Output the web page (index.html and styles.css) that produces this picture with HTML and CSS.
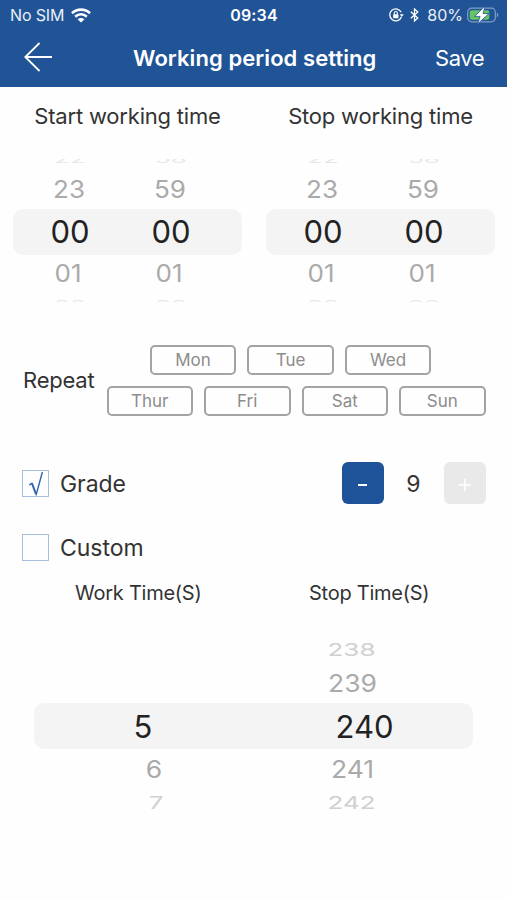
FILE: index.html
```html
<!DOCTYPE html>
<html lang="en">
<head>
<meta charset="utf-8">
<title>Working period setting</title>
<link rel="stylesheet" href="styles.css">
</head>
<body>
<header class="header">
  <div class="status">
    <div class="status-left">
      <span class="carrier">No SIM</span>
      <svg class="wifi" width="20" height="15" viewBox="0 0 20 15" fill="none" stroke="#fff" stroke-width="2.6"><path d="M1 5.3C6 .4 14 .4 19 5.3M4.2 8.7c3.3-3.2 8.3-3.2 11.6 0"/><path d="M10 14.6 6.7 11.4c1.8-1.8 4.8-1.8 6.6 0z" fill="#fff" stroke="none"/></svg>
    </div>
    <span class="clock">09:34</span>
    <div class="status-right">
      <svg width="15" height="14" viewBox="0 0 15 14" fill="none" stroke="#fff" stroke-width="1.3"><path d="M12.2 4.3A6 6 0 1 0 12.4 9"/><path d="M10.8 6.2h4L12.8 9z" fill="#fff" stroke="none"/><rect x="4.2" y="6.2" width="5.2" height="4" rx=".5" fill="#fff" stroke="none"/><path d="M5.3 6.5V5a1.5 1.5 0 0 1 3 0v1.5" stroke-width="1.1"/></svg>
      <svg class="bt" width="9" height="14" viewBox="0 0 9 14" fill="none" stroke="#fff" stroke-width="1.3"><path d="M.8 3.8 7.8 10 4.5 13V1l3.3 3L.8 10.2"/></svg>
      <span class="percent">80%</span>
      <svg class="battery" width="33" height="18" viewBox="0 0 33 18"><rect x=".7" y="2.2" width="27.6" height="13.6" rx="4" fill="none" stroke="#7f9fc8" stroke-width="1.2"/><path d="M29.8 6.6c2 .8 2 4 0 4.8z" fill="#7f9fc8"/><rect x="2.7" y="4.2" width="19.6" height="9.6" rx="2.2" fill="#65c466"/><path d="M18.2 0 7.5 10.4h5.6L10.6 18 22 7.5h-6z" fill="#fff" stroke="#215496" stroke-width=".8"/></svg>
    </div>
  </div>
  <div class="nav">
    <svg class="back" width="29" height="30" viewBox="0 0 29 30" fill="none" stroke="#fff" stroke-width="1.8"><path d="M15.5 1 1.3 15l14.2 14M1.3 15H28"/></svg>
    <h1 class="title">Working period setting</h1>
    <span class="save">Save</span>
  </div>
</header>
<main>
  <section class="times">
    <div class="time">
      <h2 class="label">Start working time</h2>
      <div class="wheel">
        <div class="row edge top"><span>22</span><span>58</span></div>
        <div class="row near"><span>23</span><span>59</span></div>
        <div class="row current"><span>00</span><span>00</span></div>
        <div class="row near after"><span>01</span><span>01</span></div>
        <div class="row edge bottom"><span>02</span><span>02</span></div>
      </div>
    </div>
    <div class="time">
      <h2 class="label">Stop working time</h2>
      <div class="wheel">
        <div class="row edge top"><span>22</span><span>58</span></div>
        <div class="row near"><span>23</span><span>59</span></div>
        <div class="row current"><span>00</span><span>00</span></div>
        <div class="row near after"><span>01</span><span>01</span></div>
        <div class="row edge bottom"><span>02</span><span>02</span></div>
      </div>
    </div>
  </section>
  <section class="repeat">
    <span class="repeat-label">Repeat</span>
    <div class="days">
      <div class="days-row first"><span class="day">Mon</span><span class="day">Tue</span><span class="day">Wed</span></div>
      <div class="days-row"><span class="day">Thur</span><span class="day">Fri</span><span class="day">Sat</span><span class="day">Sun</span></div>
    </div>
  </section>
  <section class="option">
    <span class="box"><svg width="16" height="26" viewBox="0 0 16 26" fill="none" stroke="#2f62a8"><path d="M1.3 14.2 3.8 12" stroke-width="1.3"/><path d="M3.8 12 8 23" stroke-width="2"/><path d="M8 24.4 14.4 1" stroke-width="1.4"/></svg></span>
    <span class="option-label grade">Grade</span>
    <div class="stepper">
      <span class="step minus"><i></i></span>
      <span class="count">9</span>
      <span class="step plus"><svg width="14" height="14" viewBox="0 0 14 14" stroke="#fff" stroke-width="1.5"><path d="M7 .8v12.4M.8 7h12.4"/></svg></span>
    </div>
  </section>
  <section class="option custom">
    <span class="box"></span>
    <span class="option-label">Custom</span>
  </section>
  <section class="cycle">
    <div class="cycle-labels"><span class="work-label">Work Time(S)</span><span class="stop-label">Stop Time(S)</span></div>
    <div class="wheel wide">
      <div class="row far"><span></span><span>238</span></div>
      <div class="row near"><span></span><span>239</span></div>
      <div class="row current"><span>5</span><span>240</span></div>
      <div class="row near after"><span>6</span><span>241</span></div>
      <div class="row far after"><span>7</span><span>242</span></div>
    </div>
  </section>
</main>
</body>
</html>
```
FILE: styles.css
```css
* { box-sizing: border-box; }
body {
  margin: 0;
  width: 507px;
  height: 900px;
  overflow: hidden;
  background: #fefefe;
  color: #333;
  font-family: Inter, "Liberation Sans", sans-serif;
  white-space: nowrap;
}
h1, h2 { margin: 0; font-weight: 400; }
svg { display: block; flex: none; }

.header { height: 87px; background: #215496; color: #fff; }
.status {
  display: grid;
  grid-template-columns: 1fr auto 1fr;
  align-items: center;
  height: 30px;
  padding: 0 7px 0 10px;
  font-size: 16px;
  color: #e9eff7;
}
.status-left, .status-right { display: flex; align-items: center; }
.status-right { justify-content: flex-end; }
.carrier { letter-spacing: -.15px; }
.wifi { margin-left: 7px; }
.clock { margin-left: -2px; font-weight: 600; color: #fff; letter-spacing: .2px; }
.bt { margin: 0 7px 0 6px; }
.percent { margin-left: 1px; }
.battery { margin-left: 4px; }
.nav { display: flex; align-items: center; height: 56px; padding: 0 23px 0 24px; }
.back { margin-top: -2px; }
.title { flex: 1; margin-left: 80px; font-size: 22px; font-weight: 600; letter-spacing: .07px; }
.save { font-size: 22px; letter-spacing: -.5px; margin-top: -1px; }

.times { display: flex; gap: 24px; padding-left: 13px; }
.time { width: 229px; }
.label { height: 59px; line-height: 59px; font-size: 22px; letter-spacing: -.2px; text-align: center; }

.wheel { height: 170px; padding-top: 13px; }
.row {
  display: grid;
  grid-template-columns: 101px 101px;
  height: 46px;
  padding-left: 6.5px;
  align-items: center;
  text-align: center;
}
.row span { display: block; }
.near { height: 40px; margin-top: 5px; font-size: 26px; color: #aaa; }
.near span { transform: translate(-1px, 0) scaleY(.93); }
.near.after { height: 37px; margin-top: 0; }
.near.after span { transform: translate(-2px, 0) scaleY(.93); }
.current { height: 46px; margin-top: 0; border-radius: 10px; background: #f4f4f4; color: #222; font-size: 31px; font-weight: 370; }
.current span { transform: translateY(-1px); }
.edge { height: 5px; overflow: hidden; font-size: 26px; line-height: 26px; color: #e8e8e8; align-items: start; }
.edge.bottom { margin-top: 6px; height: 4px; }
.top span { transform: translateY(-13px) scaleY(.45); }
.bottom span { transform: translateY(-6px) scaleY(.45); }

.repeat { display: flex; align-items: center; height: 75px; margin-top: 27px; padding: 0 21.5px 0 23px; }
.repeat-label { margin-top: -2px; font-size: 22px; letter-spacing: -.2px; }
.days { margin-left: auto; }
.days-row { display: flex; justify-content: center; gap: 11px; }
.first { margin-bottom: 11px; padding-right: 11px; }
.day {
  display: flex;
  align-items: center;
  justify-content: center;
  width: 86.5px;
  height: 30px;
  border: 2px solid #a3a3a3;
  border-radius: 5px;
  font-size: 17px;
  color: #8c8c8c;
}

.option { display: flex; align-items: center; height: 42px; margin-top: 44px; padding: 0 21.5px 0 22px; }
.box { display: flex; justify-content: center; width: 27px; height: 27px; border: 1px solid #a7bedc; }
.option-label { margin-top: 1px; margin-left: 11px; font-size: 23px; letter-spacing: -.05px; }
.stepper { display: flex; align-items: center; margin-left: auto; }
.step { display: flex; align-items: center; justify-content: center; width: 42px; height: 42px; border-radius: 6px; background: #e9e9e9; }
.minus { background: #1e5399; }
.minus i { width: 9px; height: 2px; margin-top: 3px; background: #fff; }
.plus svg { margin-top: 4px; }
.count { width: 60px; margin-top: 2px; text-align: center; font-size: 23px; }
.custom { margin-top: 22px; }

.cycle-labels { display: flex; height: 51px; line-height: 51px; padding-left: 75px; font-size: 20px; letter-spacing: -.25px; }
.stop-label { margin-left: 107.5px; }
.wide { width: 439px; height: 220px; margin-left: 34px; padding-top: 13px; }
.wide .row { grid-template-columns: 218px 221px; padding: 0; }
.wide .near { font-size: 26.5px; }
.wide .near span { transform: translate(-10px, 0) scaleY(.91); }
.wide .near span:first-child { transform: translate(11px, 0) scaleY(.91); }
.wide .current span { transform: none; }
.wide .current span + span { transform: translateX(2px); }
.wide .near.after { height: 40px; }
.far { height: 26px; font-size: 26px; line-height: 26px; color: #d0d0d0; }
.wide .far span { transform: translate(-11px, 5px) scaleY(.67); }
.wide .far.after span { transform: translate(-11px, 1px) scaleY(.67); }
.wide .far.after span:first-child { transform: translate(13px, 1px) scaleY(.67); }
```
